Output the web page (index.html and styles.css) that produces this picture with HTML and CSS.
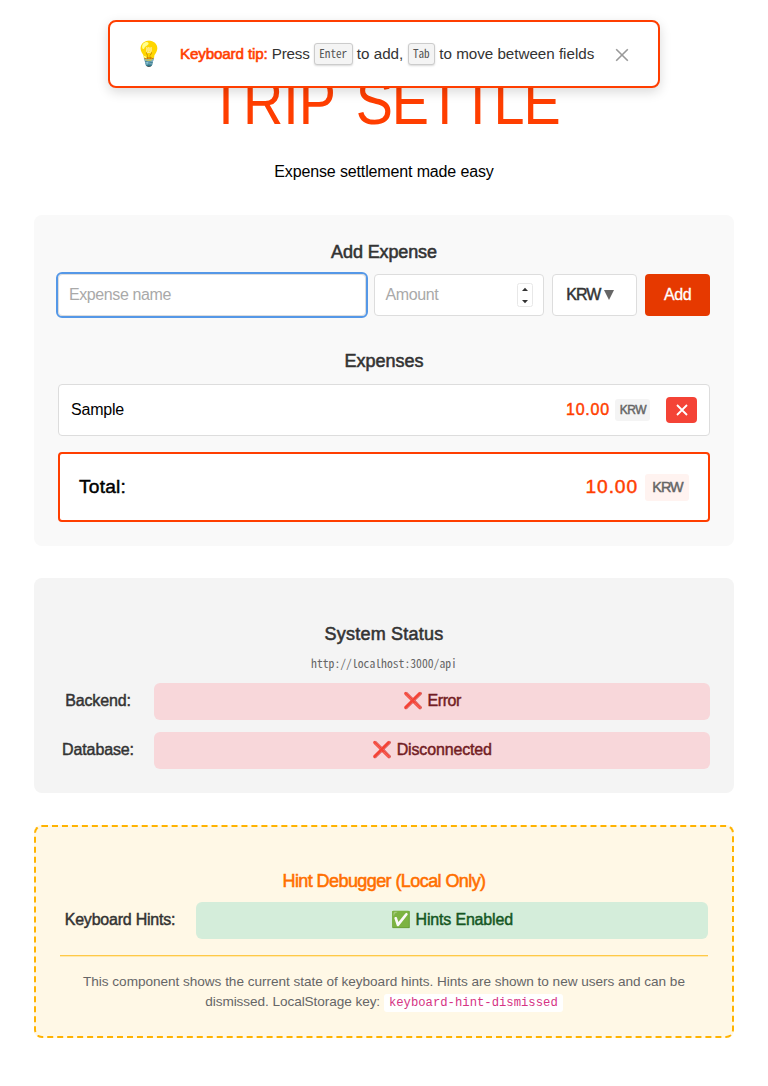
FILE: index.html
```html
<!DOCTYPE html>
<html lang="en">
<head>
<meta charset="utf-8">
<title>Trip Settle</title>
<link rel="stylesheet" href="styles.css">
</head>
<body>
<aside class="tip">
  <span class="tip-icon">💡</span>
  <p class="tip-text"><strong class="tip-strong">Keyboard tip:</strong> <span class="t-press">Press</span> <kbd class="key">Enter</kbd> <span class="t-add">to add,</span> <kbd class="key">Tab</kbd> <span class="t-move">to move between fields</span></p>
  <svg class="tip-close" viewBox="0 0 14 14"><path d="M1.2 1.2 12.8 12.8M12.8 1.2 1.2 12.8"/></svg>
</aside>
<main class="page">
  <h1 class="title"><span class="title-text">TRIP <span class="title-second">SETTLE</span></span></h1>
  <p class="subtitle">Expense settlement made easy</p>
  <section class="card expenses">
    <h2 class="heading h-add">Add Expense</h2>
    <div class="form">
      <div class="field name"><span>Expense name</span></div>
      <div class="field amount"><span>Amount</span>
        <svg class="spinner" viewBox="0 0 16 24"><rect x=".5" y=".5" width="15" height="23" rx="2"/><path d="M5 8 8 4.7 11 8ZM5 17 8 20.3 11 17Z"/></svg>
      </div>
      <div class="field currency"><span>KRW</span><svg class="caret" viewBox="0 0 10 10"><path d="M0 0H10L5 10Z"/></svg></div>
      <button class="add">Add</button>
    </div>
    <h2 class="heading h-list">Expenses</h2>
    <div class="item">
      <span class="item-name">Sample</span>
      <span class="item-amount">10.00</span>
      <span class="badge">KRW</span>
      <button class="remove"><svg viewBox="0 0 12 12"><path d="M1 1 11 11M11 1 1 11"/></svg></button>
    </div>
    <div class="total">
      <span class="total-label">Total:</span>
      <span class="total-amount">10.00</span>
      <span class="badge total-badge">KRW</span>
    </div>
  </section>
  <section class="card status">
    <h2 class="heading h-status">System Status</h2>
    <p class="url">http://localhost:3000/api</p>
    <div class="row"><span class="label">Backend:</span><span class="pill bad">❌ <span class="p-error">Error</span></span></div>
    <div class="row"><span class="label">Database:</span><span class="pill bad">❌ <span class="p-disc">Disconnected</span></span></div>
  </section>
  <section class="card debug">
    <h2 class="heading debug-heading">Hint Debugger (Local Only)</h2>
    <div class="row"><span class="label wide">Keyboard Hints:</span><span class="pill good">✅ <span class="p-hints">Hints Enabled</span></span></div>
    <p class="note"><span class="n1">This component shows the current state of keyboard hints. Hints are shown to new users and can be</span><br><span class="n2">dismissed. LocalStorage key:</span> <code class="code">keyboard-hint-dismissed</code></p>
  </section>
</main>
</body>
</html>
```
FILE: styles.css
```css
* { box-sizing: border-box; }
body { margin: 0; background: #fff; color: #000; font: 16px/24px "Liberation Sans", Arial, sans-serif; }
h1, h2, p { margin: 0; font-weight: 400; }
button { border: 0; padding: 0; font: inherit; }

.tip { position: absolute; z-index: 10; left: 108px; top: 20px; width: 552px; height: 68px; display: flex; align-items: center; padding: 0 29px 0 24px; background: #fff; border: 2px solid #ff3e00; border-radius: 8px; box-shadow: 0 4px 12px rgba(0,0,0,.15); color: #333; }
.tip-icon { width: 30px; font-size: 24px; line-height: 30px; }
.tip-text { margin-left: 16px; margin-top: -1px; flex: 1; font-size: 15.2px; white-space: nowrap; }
.tip-strong { font-weight: 400; letter-spacing: -.15px; color: #ff3e00; -webkit-text-stroke: .6px #ff3e00; }
.t-press { letter-spacing: -.2px; }
.t-move { letter-spacing: -.02px; }
.key { display: inline-block; height: 22px; padding: 0 4.4px; border: 1px solid #ccc; border-radius: 3px; background: #f4f4f4; box-shadow: 0 1px 2px rgba(0,0,0,.15); font: 11.2px/19px "Noto Sans Mono CJK JP", "Liberation Mono", monospace; color: #555; vertical-align: middle; }
.tip-close { width: 14px; height: 14px; margin-top: 2px; fill: none; stroke: #999; stroke-width: 1.6; }

.page { width: 700px; margin: 0 auto; padding-top: 59px; text-align: center; }
.title { height: 86px; font-size: 64px; line-height: 86px; color: #ff3e00; white-space: nowrap; }
.title-text { display: inline-block; word-spacing: 6px; transform: scaleX(.871); }
.title-second { letter-spacing: -1.3px; }
.subtitle { margin-top: 15px; height: 24px; letter-spacing: -.14px; }
.card { border-radius: 8px; padding: 0 24px; }
.heading { font-size: 18px; line-height: 26px; color: #333; -webkit-text-stroke: .55px currentColor; }
.h-add { letter-spacing: -.12px; }

.expenses { height: 331px; margin-top: 31px; padding-top: 24px; background: #f9f9f9; }
.form { display: flex; gap: 8px; height: 42px; margin-top: 9px; }
.field { display: flex; align-items: center; background: #fff; border: 1px solid #ddd; border-radius: 4px; color: #a9a9a9; padding: 0 10px; letter-spacing: -.4px; }
.name { width: 309px; outline: 2px solid #5598e7; outline-offset: 0; }
.amount { width: 170px; justify-content: space-between; }
.spinner { width: 16px; height: 24px; fill: #333; }
.spinner rect { fill: #fff; stroke: #e8e8e8; }
.currency { width: 85px; padding: 0 13px; color: #333; letter-spacing: -1px; }
.currency span, .item-amount, .total-label, .total-amount, .badge, .label, .pill span { -webkit-text-stroke: .45px currentColor; }
.caret { width: 10px; height: 10px; margin-left: auto; margin-right: 9px; fill: #666; }
.add { width: 65px; background: #e63900; color: #fff; border-radius: 4px; letter-spacing: -.4px; -webkit-text-stroke: .3px #fff; }
.h-list { margin-top: 32px; }
.item { display: flex; align-items: center; height: 52px; margin-top: 10px; padding: 0 12px; background: #fff; border: 1px solid #ddd; border-radius: 4px; }
.item-name, .total-label { margin-right: auto; text-align: left; }
.item-name { letter-spacing: -.2px; }
.item-amount { color: #ff3e00; letter-spacing: .8px; }
.badge { display: flex; align-items: center; justify-content: center; width: 35px; height: 22px; margin-left: 5px; padding-left: 1px; background: #f4f4f4; border-radius: 3px; color: #666; font-size: 12px; letter-spacing: -.5px; }
.remove { display: flex; align-items: center; justify-content: center; width: 31px; height: 26px; margin-left: 16px; border-radius: 4px; background: #f44336; }
.remove svg { width: 12px; height: 12px; fill: none; stroke: #fff; stroke-width: 1.8; }
.total { display: flex; align-items: center; height: 70px; margin-top: 16px; padding: 0 19px; background: #fff; border: 2px solid #ff3e00; border-radius: 4px; font-size: 19.2px; }
.total-label { letter-spacing: .2px; }
.total-amount { color: #ff3e00; letter-spacing: .9px; }
.total-badge { width: 44px; height: 27px; margin-left: 7px; font-size: 14.4px; letter-spacing: -1px; background: #fff3f0; }

.status { height: 215px; margin-top: 32px; padding-top: 43px; background: #f4f4f4; }
.h-status { letter-spacing: .22px; }
.url { height: 18px; margin: 7px 0 11px; font: 11.68px/18px "Noto Sans Mono CJK JP", "Liberation Mono", monospace; color: #666; }
.row { display: flex; gap: 16px; height: 37px; }
.row + .row { margin-top: 12px; }
.label { width: 80px; line-height: 36px; color: #333; letter-spacing: -.13px; white-space: nowrap; }
.wide { width: 120px; letter-spacing: -.22px; }
.pill { flex: 1; line-height: 36px; border-radius: 6px; }
.p-error { letter-spacing: -.4px; }
.p-disc { letter-spacing: -.15px; }
.p-hints { letter-spacing: -.17px; }
.bad { background: #f8d7da; color: #721c24; }
.good { background: #d4edda; color: #155724; }

.debug { height: 213px; margin-top: 32px; padding-top: 41px; background: #fff8e6; border: 2px dashed #ffb300; }
.debug-heading { color: #ff6f00; margin-bottom: 8px; letter-spacing: -.58px; }
.note { margin-top: 16px; padding-top: 16px; border-top: 1px solid #ffc947; box-shadow: inset 0 1px #ffe9ae; font-size: 13.6px; line-height: 20px; color: #666; white-space: nowrap; }
.n1 { letter-spacing: -.035px; }
.n2 { letter-spacing: -.07px; }
.code { padding: 2px 5px; border-radius: 3px; background: #fff; color: #d63384; font: 12.24px/15px "Liberation Mono", monospace; }
```
